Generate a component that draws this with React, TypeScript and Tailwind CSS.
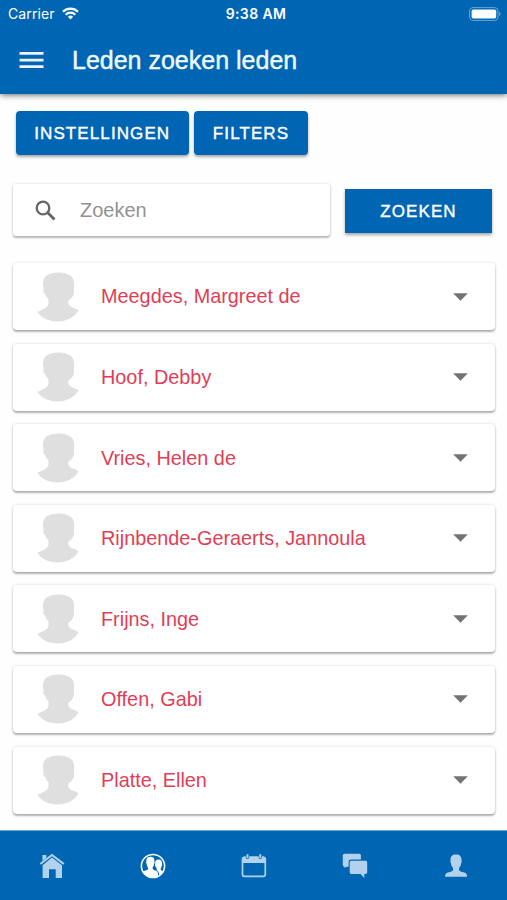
import { clsx } from "clsx";

const members = [
  "Meegdes, Margreet de",
  "Hoof, Debby",
  "Vries, Helen de",
  "Rijnbende-Geraerts, Jannoula",
  "Frijns, Inge",
  "Offen, Gabi",
  "Platte, Ellen",
];

function WifiIcon() {
  return (
    <svg className="h-[13px] w-[17px]" viewBox="0 0 17 13" fill="none" stroke="#fff" strokeWidth="2.2">
      <path d="M1 4.7a10.7 10.7 0 0 1 15 0" />
      <path d="M3.7 7.7a6.8 6.8 0 0 1 9.6 0" />
      <path d="M8.5 12.4 5.9 9.8a3.7 3.7 0 0 1 5.2 0Z" fill="#fff" stroke="none" />
    </svg>
  );
}

function BatteryIcon() {
  return (
    <svg className="h-[14px] w-[32px]" viewBox="0 0 32 14">
      <rect x=".6" y=".6" width="28.4" height="12.8" rx="3.4" fill="none" stroke="#69a5d4" strokeWidth="1" />
      <rect x="2.6" y="2.4" width="24.6" height="9.2" rx="1.8" fill="#fff" />
      <path d="M30.2 4.8c1.7.6 1.7 3.8 0 4.4Z" fill="#69a5d4" />
    </svg>
  );
}

function StatusBar() {
  return (
    <div className="flex h-[27px] items-center pr-[6px] pl-[8px] font-[Inter,sans-serif] text-white">
      <div className="flex flex-1 items-center gap-[7px]">
        <span className="text-[14px] tracking-[0.1px]">Carrier</span>
        <WifiIcon />
      </div>
      <span className="pl-[3px] text-[14px] font-semibold tracking-[0.4px]">9:38 AM</span>
      <div className="flex flex-1 justify-end">
        <BatteryIcon />
      </div>
    </div>
  );
}

function Avatar() {
  return (
    <svg className="h-[50px] w-[42px]" viewBox="0 0 42 50" fill="#dfdfdf">
      <path d="M21 .5c6 0 11 1.200 14 4.600 2.500 3 2.500 8.400 1.800 13 .8 1.500 0 4.700-1.300 6.400-.6 2-2.300 2.700-3.800 3.500-.7 1.500-.7 3.600.3 5 1.200 1.700 3 2.300 4.500 2.800 2.200.8 3.800 1.600 5 2.800C37.500 45.800 29.500 49.500 20.500 49.500S4.500 46 .5 39.800C3.700 38.500 7.700 36.800 10 34.800c1.700-1.600 1.900-5 1.300-8C9.600 25.700 8.700 23.900 8.300 22 6.600 21.300 5.900 19.300 6.700 17.500 5.300 12 5.800 6.600 9.500 3.600 12.500 1.300 16.800.5 21 .5Z" />
    </svg>
  );
}

function HomeIcon() {
  return (
    <svg className="h-[26px] w-[26px]" viewBox="0 0 26 26" fill="#b1d1ed">
      <path d="M3.500 2H7.300V5L3.500 8Z" />
      <path d="M13 .7 25.500 10.200 24 11.800 13 3.200 2 11.800.7 10.200Z" />
      <path d="M13 4.400 23 12.200V25H16.700V16.300H10V25H3.600V12.200Z" />
    </svg>
  );
}

function MembersIcon() {
  return (
    <svg className="h-[26px] w-[26px]" viewBox="0 0 26 26">
      <circle cx="13" cy="13" r="11.600" fill="#0066b3" stroke="#fff" strokeWidth="1.500" />
      <path
        fill="#fff"
        d="M2.500 18.500 7.600 16.800c.7-.6.7-1.700.2-2.600-.8-1-1.100-2.200-1.200-3.400-.6-.8-.7-1.700-.3-2.400-.2-3 1.300-4.600 4.100-4.600s4.300 1.600 4 4.600c.4.700.3 1.600-.3 2.400-.1 1.300-.5 2.500-1.300 3.500-.3 1.100-.2 2 .7 2.500l2.800 1.200c1.500.7 1.800 2 1.700 3.300L18 23.200A11.400 11.400 0 0 1 2.500 18.500Z"
      />
      <path
        fill="#fff"
        d="M15.500 13.500c-.6-.7-.8-1.500-.3-2.100-.5-3.300 1-5 3.300-5 2.600 0 3.900 1.700 3.500 4.700.4.700.2 1.600-.4 2.200-.2 1.100-.5 1.900-1 2.600 0 .8.300 1.400 1 1.700l1.500.7c-.9 1.700-2.300 3.100-4 4-.1-2.200-.4-3.900-2.500-5 .4-1.400.1-2.600-1.100-3.800Z"
      />
    </svg>
  );
}

function CalendarIcon() {
  return (
    <svg className="h-[26px] w-[26px]" viewBox="0 0 26 26">
      <rect x="1.500" y="4.300" width="22.800" height="19" rx="2" fill="none" stroke="#b1d1ed" strokeWidth="1.700" />
      <path d="M1.500 5.500Q1.500 3.500 3.500 3.500H22.300Q24.300 3.500 24.300 5.500V10H1.500Z" fill="#b1d1ed" />
      <g strokeLinecap="round">
        <path d="M6.500 3V4.300M19.300 3V4.300" stroke="#0066b3" strokeWidth="3.400" />
        <path d="M6.500 2V4.300M19.300 2V4.300" stroke="#b1d1ed" strokeWidth="2" />
      </g>
    </svg>
  );
}

function ChatIcon() {
  return (
    <svg className="h-[26px] w-[26px]" viewBox="0 0 26 26" fill="#b1d1ed">
      <path d="M2.300.800H17.400Q18.900.800 18.900 2.300V6.400H9Q6.600 6.400 6.600 8.800V13.800H4.600L2.500 15V13.800Q.800 13.800.800 12V2.300Q.800.800 2.300.800Z" />
      <path d="M9.200 7.700H23.600Q25.200 7.700 25.200 9.300V19.300Q25.200 21 23.600 21H22.300V25L18.500 21H9.200Q7.700 21 7.700 19.300V9.300Q7.700 7.700 9.200 7.700Z" />
    </svg>
  );
}

function ProfileIcon() {
  return (
    <svg className="h-[26px] w-[26px]" viewBox="0 0 26 26" fill="#b1d1ed">
      <path d="M13 1.500c3.800 0 5.700 2 5.500 5.800.3 1 .2 2.300-.4 3.100-.2 1.700-.9 3.300-2 4.500v2.400c.5 1.100 2.100 1.600 5.100 2.300 2.100.5 3 2 3 4.100H2c0-2.100.9-3.600 3-4.100 3-.7 4.500-1.200 5-2.300v-2.400c-1.100-1.200-1.800-2.800-2-4.500-.6-.8-.7-2.100-.4-3.100C7.300 3.500 9.200 1.500 13 1.500Z" />
    </svg>
  );
}

const tabs = [
  { id: "home", Icon: HomeIcon },
  { id: "members", Icon: MembersIcon },
  { id: "calendar", Icon: CalendarIcon },
  { id: "chat", Icon: ChatIcon },
  { id: "profile", Icon: ProfileIcon },
];

function Button({ label, className }: { label: string; className?: string }) {
  return (
    <button
      className={clsx(
        "flex h-[44px] items-center justify-center bg-[#0066b3] pt-px text-[17px] tracking-[1.1px] text-white shadow-[0_2px_3px_rgba(0,0,0,0.35)] [-webkit-text-stroke:0.4px_white]",
        className,
      )}
    >
      {label}
    </button>
  );
}

export default function App() {
  return (
    <div className="flex h-[900px] w-[507px] flex-col overflow-hidden bg-[#fefefe] font-['Liberation_Sans',Arial,sans-serif]">
      <header className="h-[94px] shrink-0 bg-[#0066b3] shadow-[0_1px_6px_rgba(0,0,0,0.6)]">
        <StatusBar />
        <div className="flex h-[66px] items-center pl-[19px]">
          <svg className="h-[18px] w-[25px]" viewBox="0 0 25 18" fill="#e8f5ff">
            <path d="M.5 1H24.500V3.700H.5ZM.5 7.700H24.500V10.400H.5ZM.5 14.300H24.500V17H.5Z" />
          </svg>
          <h1 className="ml-[28px] text-[25px] leading-none text-[#f0faff] [-webkit-text-stroke:0.4px_#f0faff]">
            Leden zoeken leden
          </h1>
        </div>
      </header>

      <main className="flex-1 pt-[17px] pr-[12px] pl-[13px]">
        <div className="flex gap-[5px] pl-[2.500px]">
          <Button label="INSTELLINGEN" className="w-[173.500px] rounded-[4px]" />
          <Button label="FILTERS" className="w-[114px] rounded-[4px]" />
        </div>

        <div className="mt-[29px] flex items-center gap-[15px]">
          <div className="flex h-[52px] w-[317px] items-center rounded-[3px] bg-white pl-[22px] shadow-[0_2px_2px_rgba(0,0,0,0.25),0_0_3px_rgba(0,0,0,0.14)]">
            <svg className="mt-px h-[21px] w-[21px]" viewBox="0 0 21 21" fill="none" stroke="#666" strokeWidth="2.300">
              <circle cx="8" cy="8" r="6.300" />
              <path d="M12.300 12.300 19.500 19.500" strokeWidth="2.800" />
            </svg>
            <span className="ml-[24px] text-[20px] text-[#929292]">Zoeken</span>
          </div>
          <Button label="ZOEKEN" className="mt-[2px] w-[147px]" />
        </div>

        <ul className="mt-[27px] flex flex-col gap-[13.600px]">
          {members.map((name) => (
            <li
              key={name}
              className="flex h-[67px] items-center rounded-[4px] bg-white pr-[27px] pl-[24px] shadow-[0_2px_2px_rgba(0,0,0,0.28),0_0_3px_rgba(0,0,0,0.15)]"
            >
              <Avatar />
              <span className="ml-[22px] flex-1 pt-[1.500px] text-[19.850px] text-[#e13e55]">{name}</span>
              <svg className="h-[8px] w-[15px]" viewBox="0 0 15 8" fill="#737373">
                <path d="M.2.2H14.800L7.500 7.800Z" />
              </svg>
            </li>
          ))}
        </ul>
      </main>

      <nav className="flex h-[70px] shrink-0 items-center border-t border-[#62a7d9] bg-[#0066b3] pt-px pl-px">
        {tabs.map(({ id, Icon }) => (
          <a key={id} href="#" className="flex flex-1 justify-center">
            <Icon />
          </a>
        ))}
      </nav>
    </div>
  );
}
